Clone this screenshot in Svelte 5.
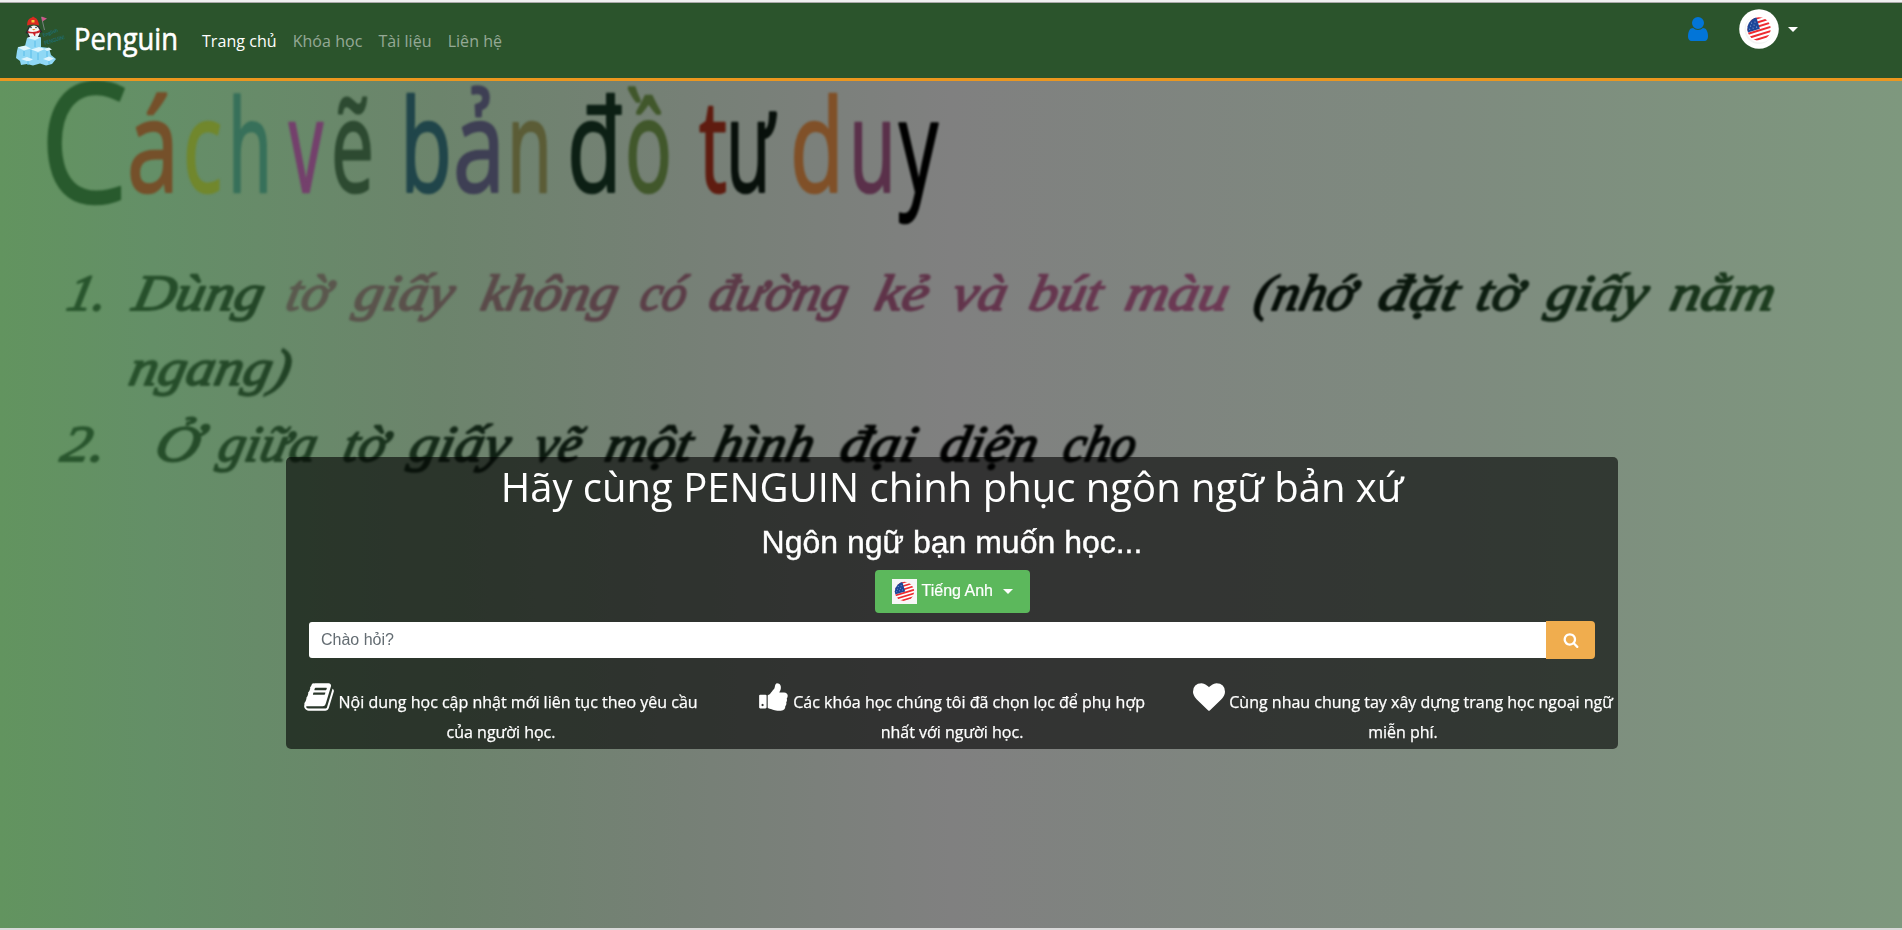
<script>
  const navItems = ['Khóa học', 'Tài liệu', 'Liên hệ'];

  // glyph, x, width, fill
  const letters = [
    ['á', 127, 52, '#75502a'], ['c', 183, 39, '#71872c'], ['h', 228, 44, '#37705a'],
    ['v', 289, 34, '#74406c'], ['ẽ', 331, 43, '#2d4a31'], ['b', 400, 52, '#20454a'],
    ['ả', 453, 52, '#3e3f54'], ['n', 507, 45, '#5b5c36'], ['đ', 567, 55, '#0c1f14'],
    ['ồ', 625, 47, '#41572b'], ['t', 699, 28, '#5f1c10'], ['ư', 726, 48, '#08100b'],
    ['d', 790, 54, '#805028'], ['u', 849, 47, '#5a304a'], ['y', 899, 39, '#000']
  ];

  // word, x, baseline, width, fill
  const words = [
    ['1.', 65, 310, 39, 'ink'], ['Dùng', 131, 310, 130, 'ink'],
    ['tờ', 284, 310, 44, 'plum'], ['giấy', 352, 310, 99, 'plum'], ['không', 479, 310, 136, 'plum'],
    ['có', 638, 310, 46, 'plum'], ['đường', 707, 310, 138, 'plum'], ['kẻ', 873, 310, 53, 'plum'],
    ['và', 950, 310, 54, 'plum'], ['bút', 1027, 310, 72, 'plum'], ['màu', 1123, 310, 103, 'plum'],
    ['(nhớ', 1252, 310, 101, 'ink'], ['đặt', 1376, 310, 80, 'ink'], ['tờ', 1474, 310, 46, 'ink'],
    ['giấy', 1544, 310, 101, 'ink'], ['nằm', 1668, 310, 104, 'ink'],
    ['ngang)', 127, 385, 161, 'ink'],
    ['2.', 59, 461, 44, 'ink'], ['Ở', 153, 461, 44, 'ink'], ['giữa', 216, 461, 98, 'ink'],
    ['tờ', 341, 461, 44, 'ink'], ['giấy', 407, 461, 100, 'ink'], ['vẽ', 532, 461, 47, 'ink'],
    ['một', 603, 461, 86, 'ink'], ['hình', 712, 461, 99, 'ink'], ['đại', 838, 461, 76, 'ink'],
    ['diện', 938, 461, 97, 'ink'], ['cho', 1061, 461, 72, 'ink']
  ];

  const icons = {
    user: 'M1536 1399q0 109-62.5 187t-150.5 78h-854q-88 0-150.5-78t-62.5-187q0-85 8.5-160.5t31.5-152 58.5-131 94-89 134.5-34.5q131 128 313 128t313-128q76 0 134.5 34.5t94 89 58.5 131 31.5 152 8.5 160.5zm-256-887q0 159-112.5 271.5t-271.5 112.5-271.5-112.5-112.5-271.5 112.5-271.5 271.5-112.5 271.5 112.5 112.5 271.5z',
    search: 'M1216 832q0-185-131.5-316.5t-316.5-131.5-316.5 131.5-131.5 316.5 131.5 316.5 316.5 131.5 316.5-131.5 131.5-316.5zm512 832q0 52-38 90t-90 38q-54 0-90-38l-343-342q-179 124-399 124-143 0-273.5-55.5t-225-150-150-225-55.5-273.5 55.5-273.5 150-225 225-150 273.5-55.5 273.5 55.5 225 150 150 225 55.5 273.5q0 220-124 399l343 343q37 37 37 90z',
    heart: 'M896 1664q-26 0-44-18l-624-602q-10-8-27.5-26t-55.5-65.5-68-97.5-53.5-121-23.5-138q0-220 127-344t351-124q62 0 126.5 21.5t120 58 95.5 68.5 76 68q36-36 76-68t95.5-68.5 120-58 126.5-21.5q224 0 351 124t127 344q0 221-229 450l-623 600q-18 18-44 18z',
    thumb: 'M320 1344q0-26-19-45t-45-19q-27 0-45.5 19t-18.5 45q0 27 18.5 45.5t45.5 18.5q26 0 45-18.5t19-45.5zm160-512v640q0 26-19 45t-45 19h-288q-26 0-45-19t-19-45v-640q0-26 19-45t45-19h288q26 0 45 19t19 45zm1184 0q0 86-55 149 15 44 15 76 3 76-43 137 17 56 0 117-15 57-54 94 9 112-49 181-64 76-197 78h-129q-66 0-144-15.5t-121.5-29-120.5-39.5q-123-43-158-44-26-1-45-19.5t-19-44.5v-641q0-25 18-43.5t43-20.5q24-2 76-59t101-121q68-87 101-120 18-18 31-48t17.5-48.5 13.5-60.5q7-39 12.5-61t19.5-52 34-50q19-19 45-19 46 0 82.5 10.5t60 26 40 40.5 24 45 12 50 5 45 .5 39q0 38-9.5 76t-19 60-27.5 56q-3 6-10 18t-11 22-8 24h277q78 0 135 57t57 135z',
    book: 'M1703 478q40 57 18 129l-275 906q-19 64-76.5 107.5t-122.5 43.5h-923q-77 0-148.5-53.5t-99.5-131.5q-24-67-2-127 0-4 3-27t4-37q1-8-3-21.5t-3-19.5q2-11 8-21t16.5-23.5 16.5-23.5q23-38 45-91.5t30-91.5q3-10 .5-30t-.5-28q3-11 17-28t17-23q21-36 42-92t25-90q1-9-2.5-32t.5-28q4-13 22-30.5t22-22.5q19-26 42.5-84.5t27.5-96.5q1-8-3-25.5t-2-26.5q2-8 9-18t18-23 17-21q8-12 16.5-30.5t15-35 16-36 19.5-32 26.5-23.5 36-11.5 47.5 5.5l-1 3q38-9 51-9h761q74 0 114 56t18 130l-274 906q-36 119-71.5 153.5t-128.5 34.5h-869q-27 0-38 15-11 16-1 43 24 70 144 70h923q29 0 56-15.5t35-41.5l300-987q7-22 5-57 38 15 59 43zm-1064 2q-4 13 2 22.5t20 9.5h608q13 0 25.5-9.5t16.5-22.5l21-64q4-13-2-22.5t-20-9.5h-608q-13 0-25.5 9.5t-16.5 22.5zm-83 256q-4 13 2 22.5t20 9.5h608q13 0 25.5-9.5t16.5-22.5l21-64q4-13-2-22.5t-20-9.5h-608q-13 0-25.5 9.5t-16.5 22.5z'
  };

  const features = [
    { icon: 'book', box: '64 0 1664 1792', w: 30, lines: ['Nội dung học cập nhật mới liên tục theo yêu cầu', 'của người học.'] },
    { icon: 'thumb', box: '64 0 1664 1792', w: 30, lines: ['Các khóa học chúng tôi đã chọn lọc để phụ hợp', 'nhất với người học.'] },
    { icon: 'heart', box: '0 0 1792 1792', w: 32, lines: ['Cùng nhau chung tay xây dựng trang học ngoại ngữ', 'miễn phí.'] }
  ];
</script>

{#snippet flag(id)}
  <defs><clipPath {id}><circle cx="12.5" cy="12.5" r="9.7" /></clipPath></defs>
  <g clip-path="url(#{id})">
    <rect width="25" height="25" fill="#fff" />
    <g transform="rotate(-17 12.5 12.5)" fill="#ee2b30">
      <rect x="0" y="2.6" width="25" height="1.7" />
      <rect x="0" y="6" width="25" height="1.7" />
      <rect x="0" y="9.4" width="25" height="1.7" />
      <rect x="0" y="12.8" width="25" height="1.7" />
      <rect x="0" y="16.2" width="25" height="1.7" />
      <rect x="0" y="19.6" width="25" height="1.7" />
      <rect x="0" y="0" width="13.2" height="12.6" fill="#1d4699" />
      <g fill="#8ea6d4">
        <circle cx="5" cy="6" r=".5" /><circle cx="8" cy="6" r=".5" /><circle cx="11" cy="6" r=".5" />
        <circle cx="6.5" cy="8.2" r=".5" /><circle cx="9.5" cy="8.2" r=".5" />
        <circle cx="5" cy="10.4" r=".5" /><circle cx="8" cy="10.4" r=".5" /><circle cx="11" cy="10.4" r=".5" />
      </g>
    </g>
  </g>
{/snippet}

<div class="page">
  <header>
    <a class="brand" href="#top" aria-label="Penguin">
      <svg class="logo" width="50" height="50" viewBox="0 0 50 50">
        <path d="M25.5 1l3 13" stroke="#8b8f96" stroke-width=".8" />
        <path d="M25.5 .5l5.5 2-4.500 3z" fill="#d0588c" />
        <path d="M9.500 17l3.500-7h9.500l4 6-2.500 1v4q-6 4-12 0v-3z" fill="#252a33" />
        <ellipse cx="18" cy="16" rx="5.800" ry="6.500" fill="#f5f5f5" />
        <path d="M11 9.500q0-7 5-8l1-1 1.500 1q4 1.500 4.500 8-6-2-12 0z" fill="#dc2a1f" />
        <path d="M15.500 4h3v2.500h-3z" fill="#f3c73c" />
        <circle cx="15" cy="11.500" r=".8" fill="#333" /><circle cx="20" cy="11.500" r=".8" fill="#333" />
        <path d="M16 13h3.500l-1.700 1.600z" fill="#f0932b" />
        <path d="M11.500 15q6 2.500 12.500-1l.5 2q-3 1.500-5 1.500l-.5 3.500-2-3.500q-4 0-5.500-1z" fill="#c9202a" />
        <path d="M11 22l6-2 8 1.500v9.500l8 1 2 7 5 4-4 5-6 1.500-6-2-7 2-6-1.500-6 1-1-4-4-3 1-7 1-4 7-1z" fill="#8fd8f5" />
        <path d="M11 22l6-2 8 1.500-6 2.500zM2 31.500l7-2 6 3-7 2zM15 33.500l8-2.500 6 2-7 3zM28 33l5-1.500 3 2-5 1.500zM5 43l6-2 6 2.500-5 2zM27 43l6-2.500 5 2-5 2.500z" fill="#dff6fe" />
        <path d="M19 25v6M8 35v5M22 37v7M31 35v6M12 45v4M33 45v3M15 34v8" stroke="#5fc0e9" stroke-width="1.100" fill="none" />
        <g fill="#1d6e72" font-family="Lato, sans-serif" font-weight="bold">
          <text x="27.500" y="21" font-size="5" transform="rotate(-20 27.500 21)">English</text>
          <text x="29" y="29" font-size="5.500" textLength="21" lengthAdjust="spacingAndGlyphs" transform="rotate(-17 29 29)">PENGUIN!</text>
        </g>
      </svg>
      <svg class="name" width="106" height="50" viewBox="0 0 106 50">
        <text x="0" y="34" textLength="104" lengthAdjust="spacingAndGlyphs">Penguin</text>
      </svg>
    </a>
    <nav>
      <a class="active" href="#home">Trang chủ</a>
      {#each navItems as item}<a href="#page">{item}</a>{/each}
    </nav>
    <div class="account">
      <svg class="user" width="28" height="28" viewBox="0 0 1792 1792"><path d={icons.user} /></svg>
      <svg width="40" height="40" viewBox="0 0 40 40">
        <circle cx="20" cy="20" r="19.8" fill="#fff" />
        <circle cx="20" cy="20.5" r="14.5" fill="#f4f4f4" />
        <circle cx="21" cy="19.5" r="14" fill="#fff" />
        <g transform="translate(5 5) scale(1.2)">{@render flag('flag-nav')}</g>
      </svg>
      <span class="caret"></span>
    </div>
  </header>

  <main>
    <svg class="backdrop" width="1902" height="847" viewBox="0 81 1902 847">
      <defs>
        <linearGradient id="ink" gradientUnits="userSpaceOnUse" x1="0" y1="0" x2="1902" y2="0">
          <stop offset="0" stop-color="#2b5c30" />
          <stop offset=".14" stop-color="#234527" />
          <stop offset=".27" stop-color="#0e1d12" />
          <stop offset=".48" stop-color="#000" />
          <stop offset=".62" stop-color="#020503" />
          <stop offset=".8" stop-color="#0f2113" />
          <stop offset=".93" stop-color="#1e3e20" />
        </linearGradient>
        <linearGradient id="plum" gradientUnits="userSpaceOnUse" x1="284" y1="0" x2="1228" y2="0">
          <stop offset="0" stop-color="#5a5a4e" />
          <stop offset=".3" stop-color="#5a4448" />
          <stop offset=".6" stop-color="#5e3348" />
          <stop offset="1" stop-color="#6d3a55" />
        </linearGradient>
      </defs>
      <g class="headline">
        <text x="40" y="202" font-size="166" fill="#285a2d" stroke="#285a2d" textLength="88" lengthAdjust="spacingAndGlyphs">C</text>
        {#each letters as [glyph, x, w, fill]}
          <text {x} y="192" font-size="128" {fill} stroke={fill} textLength={w} lengthAdjust="spacingAndGlyphs">{glyph}</text>
        {/each}
      </g>
      <g class="script">
        {#each words as [word, x, y, w, fill]}
          <g fill="url(#{fill})" stroke="url(#{fill})">
            <text {x} {y} textLength={w} lengthAdjust="spacingAndGlyphs" transform="translate({x} {y}) skewX(-12) translate({-x} {-y})">{word}</text>
          </g>
        {/each}
      </g>
    </svg>

    <section class="panel">
      <h1>Hãy cùng PENGUIN chinh phục ngôn ngữ bản xứ</h1>
      <h2>Ngôn ngữ bạn muốn học...</h2>
      <button class="language">
        <svg width="25" height="25" viewBox="0 0 25 25"><rect width="25" height="25" fill="#f7f7f7" />{@render flag('flag-btn')}</svg>
        <span>Tiếng Anh</span>
        <span class="caret"></span>
      </button>
      <form>
        <input type="text" placeholder="Chào hỏi?" />
        <button type="button" aria-label="Tìm">
          <svg width="16" height="16" viewBox="0 0 1792 1792"><path d={icons.search} /></svg>
        </button>
      </form>
      <div class="features">
        {#each features as f}
          <p><svg width={f.w} height="32" viewBox={f.box}><path d={icons[f.icon]} /></svg> {f.lines[0]}<br />{f.lines[1]}</p>
        {/each}
      </div>
    </section>
  </main>
</div>

<style>
  :global(body) { margin: 0; background: #fff; overflow: hidden; }
  * { box-sizing: border-box; }
  .page {
    height: 930px;
    display: flex;
    flex-direction: column;
    border-top: 2px solid #f0f0f1;
    border-bottom: 2px solid #d9d9d9;
    font: 16px/24px "Open Sans", sans-serif;
    color: #fff;
  }
  header {
    flex: none;
    height: 79px;
    display: flex;
    background: #2b542c;
    border-top: 1px solid #a9a9a9;
    border-bottom: 3px solid #ec971f;
    padding: 0 104px 0 16px;
  }
  a { color: inherit; text-decoration: none; }
  .brand { display: flex; gap: 8px; padding-top: 13px; }
  .logo { overflow: visible; }
  .name { fill: #fff; stroke: #fff; stroke-width: .6px; stroke-linejoin: round; font: 400 31px "Open Sans", sans-serif; overflow: visible; }
  nav { display: flex; gap: 16px; padding: 26px 0 0 22px; color: rgba(255, 255, 255, .5); letter-spacing: .05px; }
  nav .active { color: #fff; }
  .account { margin-left: auto; display: flex; align-items: center; height: 52px; }
  .user { fill: #0275d8; margin-right: 27px; }
  .caret {
    border: 5px solid transparent;
    border-top-color: #fff;
    border-bottom: 0;
    margin-left: 9px;
  }
  main {
    flex: 1;
    display: grid;
    justify-items: center;
    align-items: start;
    background: linear-gradient(90deg, #62945f 0, #648f67 8%, #6c846c 23%, #768076 36%, #808080 50%, #7e8a7f 75%, #7e987e 100%);
  }
  .backdrop, .panel { grid-area: 1 / 1; }
  .headline { font-family: "Open Sans", sans-serif; stroke-width: 2.5px; stroke-linejoin: round; filter: blur(1px); }
  .script { font: italic 400 51px "Liberation Serif", serif; stroke-width: 1.8px; stroke-linejoin: round; filter: blur(1px); }
  .panel {
    width: 1332px;
    height: 292px;
    margin: 376px 0 0 2px;
    border-radius: 5px;
    background: rgba(0, 0, 0, .6);
    display: flex;
    flex-direction: column;
    align-items: center;
    z-index: 1;
  }
  h1 { margin: 8px 0 0; font-size: 40px; line-height: 44px; font-weight: 400; white-space: nowrap; }
  h2 { margin: 16px 0 0; font: 400 32px/35px "Liberation Sans", Arial, sans-serif; white-space: nowrap; -webkit-text-stroke: .4px #fff; }
  .language {
    margin-top: 10px;
    width: 155px;
    height: 43px;
    flex: none;
    border: 0;
    border-radius: 4px;
    background: #5cb85c;
    color: #fff;
    display: flex;
    align-items: center;
    padding: 0 17px;
    font: 16px/20px "Liberation Sans", Arial, sans-serif;
    white-space: nowrap;
  }
  .language span:first-of-type { margin-left: 5px; margin-top: -1px; -webkit-text-stroke: .2px #fff; }
  .language .caret { margin-left: auto; }
  form { display: flex; align-items: center; width: 1286px; height: 38px; margin: 8px 0 0; }
  input {
    flex: 1;
    height: 36px;
    border: 0;
    border-radius: 3px 0 0 3px;
    padding: 0 12px;
    font: 16px "Liberation Sans", Arial, sans-serif;
    background: #fff;
  }
  input::placeholder { color: #636c72; opacity: 1; }
  form button {
    width: 49px;
    height: 38px;
    border: 0;
    border-radius: 0 4px 4px 0;
    background: #f0ad4e;
    padding: 0;
    display: flex;
    align-items: center;
    justify-content: center;
  }
  form button svg { fill: #fff; }
  .features { display: grid; grid-template-columns: repeat(3, 451px); margin-top: 28px; }
  p { margin: 0; text-align: center; line-height: 30px; white-space: nowrap; -webkit-text-stroke: .25px #fff; }
  p svg { fill: #fff; vertical-align: -4.5px; margin-top: -12px; }
</style>
